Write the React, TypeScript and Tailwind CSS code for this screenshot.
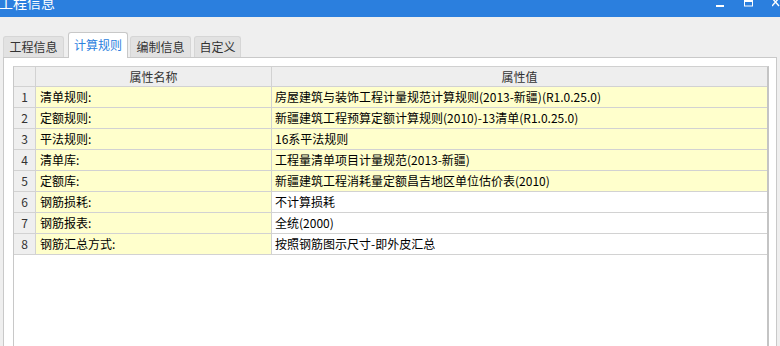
import React from "react";

const rows: [string, string, boolean][] = [
  ["清单规则:", "房屋建筑与装饰工程计量规范计算规则(2013-新疆)(R1.0.25.0)", true],
  ["定额规则:", "新疆建筑工程预算定额计算规则(2010)-13清单(R1.0.25.0)", true],
  ["平法规则:", "16系平法规则", true],
  ["清单库:", "工程量清单项目计量规范(2013-新疆)", true],
  ["定额库:", "新疆建筑工程消耗量定额昌吉地区单位估价表(2010)", true],
  ["钢筋损耗:", "不计算损耗", false],
  ["钢筋报表:", "全统(2000)", false],
  ["钢筋汇总方式:", "按照钢筋图示尺寸-即外皮汇总", false],
];

export default function App() {
  return (
    <div
      className="w-[780px] h-[346px] bg-[#efefef] overflow-hidden flex flex-col text-[12px]"
      style={{ fontFamily: '"Microsoft YaHei", "Noto Sans CJK SC", "Noto Sans", sans-serif' }}
    >
      {/* title bar */}
      <div className="h-[17px] shrink-0 bg-[#2b7fde] flex items-start overflow-hidden">
        <span className="text-white text-[14px] leading-[14px] -mt-[5px] ml-[-1px]">工程信息</span>
        <div className="ml-auto flex items-start">
          <svg width="8" height="17" className="mr-[20px]">
            <rect x="0" y="5" width="8" height="2" fill="#fff" />
          </svg>
          <svg width="9" height="17" className="mr-[19px]">
            <rect x="0.5" y="-1" width="8" height="7" fill="none" stroke="#fff" strokeWidth="1" />
            <rect x="0" y="0" width="9" height="2" fill="#fff" />
          </svg>
          <svg width="8" height="17">
            <path d="M0 -2 L7 6 M7 -2 L0 6" stroke="#fff" strokeWidth="1.4" fill="none" />
          </svg>
        </div>
      </div>

      {/* tab strip */}
      <div className="h-[40px] shrink-0 flex items-end pl-[3px] relative z-10">
        <div className="h-[21px] w-[61px] bg-[#e2e2e2] border border-b-0 border-[#d6d6d6] rounded-t-[3px] flex items-center justify-center text-[#333]">
          工程信息
        </div>
        <div className="ml-[4px] h-[26px] -mb-px w-[60px] bg-white border border-b-0 border-[#c8c8c8] rounded-t-[3px] flex items-center justify-center text-[#2b7fde] pb-px">
          计算规则
        </div>
        <div className="ml-[2px] h-[21px] w-[61px] bg-[#e2e2e2] border border-b-0 border-[#d6d6d6] rounded-t-[3px] flex items-center justify-center text-[#333]">
          编制信息
        </div>
        <div className="ml-[3px] h-[21px] w-[47px] bg-[#e2e2e2] border border-b-0 border-[#d6d6d6] rounded-t-[3px] flex items-center justify-center text-[#333]">
          自定义
        </div>
      </div>

      {/* panel */}
      <div className="flex-1 ml-[3px] mr-[3px] bg-white border border-b-0 border-[#c9c9c9] pt-[8px] pl-[9px] pr-[7px] flex flex-col">
        <div className="flex-1 border-t border-l border-r-2 border-t-[#d0d0d0] border-l-[#c8c8c8] border-r-[#c4c4c4] bg-white">
          <div className="grid grid-cols-[22px_236px_1fr]">
            <div className="h-[20px] bg-[#eeeeee] border-r border-b border-[#d2d2d2]" />
            <div className="h-[20px] bg-[#eeeeee] border-r border-b border-[#d2d2d2] flex items-center justify-center text-[#333]">
              属性名称
            </div>
            <div className="h-[20px] bg-[#eeeeee] border-b border-[#d2d2d2] flex items-center justify-center text-[#333]">
              属性值
            </div>
            {rows.map(([name, value, yellow], i) => (
              <React.Fragment key={i}>
                <div className="h-[21px] bg-[#efefef] border-r border-b border-[#d2d2d2] flex items-center justify-center text-[#333]">
                  {i + 1}
                </div>
                <div className="h-[21px] bg-[#ffffcc] border-r border-b border-[#d2d2d2] flex items-center pl-[4px] text-black whitespace-nowrap">
                  {name}
                </div>
                <div
                  className={
                    yellow
                      ? "h-[21px] bg-[#ffffcc] border-b border-[#d2d2d2] flex items-center pl-[3px] text-black whitespace-nowrap"
                      : "h-[21px] bg-white border-b border-[#d2d2d2] flex items-center pl-[3px] text-black whitespace-nowrap"
                  }
                >
                  {value}
                </div>
              </React.Fragment>
            ))}
          </div>
        </div>
      </div>
    </div>
  );
}
